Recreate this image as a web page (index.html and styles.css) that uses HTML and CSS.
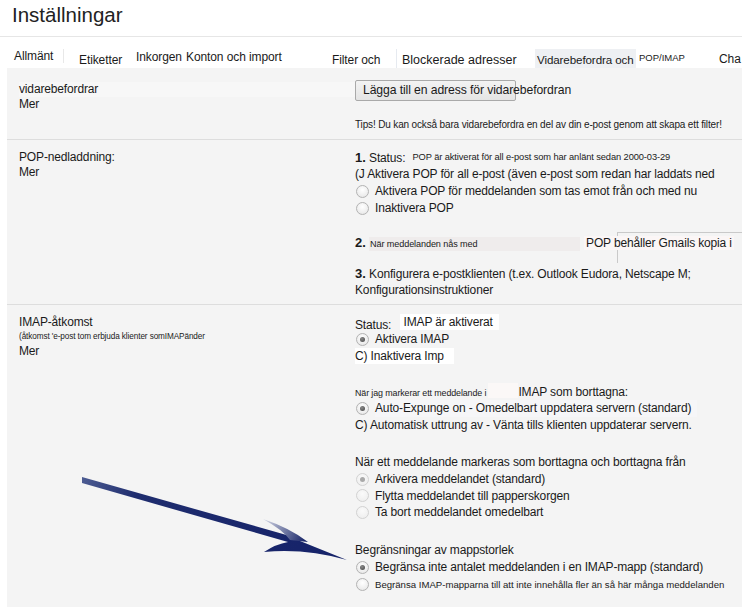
FILE: index.html
```html
<!DOCTYPE html>
<html lang="sv">
<head>
<meta charset="utf-8">
<title>Inställningar</title>
<link rel="stylesheet" href="styles.css">
</head>
<body>
<header class="header">Inställningar</header>
<nav class="tabs">
  <span class="tab t1">Allmänt</span>
  <span class="tab t2">Etiketter</span>
  <span class="tab t3">Inkorgen</span>
  <span class="tab t4">Konton och import</span>
  <span class="tab t5">Filter och</span>
  <span class="tab t6">Blockerade adresser</span>
  <span class="tab t7"><span class="active">Vidarebefordra och</span></span>
  <span class="tab t8">POP/IMAP</span>
  <span class="tab t9">Cha</span>
</nav>
<main class="panel">
  <section class="row row1">
    <div class="left">
      <div class="lbl">vidarebefordrar</div>
      <div class="lbl">Mer</div>
    </div>
    <div class="right">
      <div class="btnline"><span class="btn">Lägga till en adress för vidarebefordran</span></div>
      <div class="tips">Tips! Du kan också bara vidarebefordra en del av din e-post genom att skapa ett filter!</div>
    </div>
  </section>
  <section class="row row2">
    <div class="left">
      <div class="lbl">POP-nedladdning:</div>
      <div class="lbl">Mer</div>
    </div>
    <div class="right">
      <div class="line"><b class="num">1.</b> Status: <span class="small s1">POP är aktiverat för all e-post som har anlänt sedan 2000-03-29</span></div>
      <div class="line">(J Aktivera POP för all e-post (även e-post som redan har laddats ned</div>
      <div class="line opt"><span class="radio"></span>Aktivera POP för meddelanden som tas emot från och med nu</div>
      <div class="line opt"><span class="radio"></span>Inaktivera POP</div>
      <div class="line gap2"><b class="num">2.</b> <span class="small s2">När meddelanden nås med</span><span class="keep">POP behåller Gmails kopia i</span></div>
      <div class="line gap3"><b class="num">3.</b> Konfigurera e-postklienten (t.ex. Outlook Eudora, Netscape M;</div>
      <div class="line">Konfigurationsinstruktioner</div>
    </div>
  </section>
  <section class="row row3">
    <div class="left">
      <div class="lbl">IMAP-åtkomst</div>
      <div class="tiny">(åtkomst 'e-post tom erbjuda klienter somIMAPänder</div>
      <div class="lbl">Mer</div>
    </div>
    <div class="right">
      <div class="line">Status: <span class="white w1">IMAP är aktiverat</span></div>
      <div class="line opt"><span class="radio on"></span>Aktivera IMAP</div>
      <div class="line"><span class="white w2">C) Inaktivera Imp</span></div>
      <div class="line gapA"><span class="small s3">När jag markerar ett meddelande i</span><span class="blank"></span>IMAP som borttagna:</div>
      <div class="line opt"><span class="radio on"></span><span class="soft">Auto-Expunge on - Omedelbart uppdatera servern (standard)</span></div>
      <div class="line">C) Automatisk uttrung av - Vänta tills klienten uppdaterar servern.</div>
      <div class="line gapB">När ett meddelande markeras som borttagna och borttagna från</div>
      <div class="line opt tight"><span class="radio dis on"></span>Arkivera meddelandet (standard)</div>
      <div class="line opt tight"><span class="radio dis"></span>Flytta meddelandet till papperskorgen</div>
      <div class="line opt tight"><span class="radio dis"></span>Ta bort meddelandet omedelbart</div>
      <div class="line gapC">Begränsningar av mappstorlek</div>
      <div class="line opt"><span class="radio on"></span>Begränsa inte antalet meddelanden i en IMAP-mapp (standard)</div>
      <div class="line opt"><span class="radio"></span><span class="small s4">Begränsa IMAP-mapparna till att inte innehålla fler än så här många meddelanden</span></div>
    </div>
  </section>
</main>
<svg class="arrow" width="742" height="607" viewBox="0 0 742 607" aria-hidden="true">
  <defs>
    <linearGradient id="shaft" x1="82" y1="478" x2="300" y2="540" gradientUnits="userSpaceOnUse">
      <stop offset="0" stop-color="#4d5c92"/>
      <stop offset="0.25" stop-color="#1f2d6e"/>
      <stop offset="1" stop-color="#17246a"/>
    </linearGradient>
    <linearGradient id="wing" x1="263" y1="519" x2="305" y2="540" gradientUnits="userSpaceOnUse">
      <stop offset="0" stop-color="#d6d9e6"/>
      <stop offset="1" stop-color="#1a276a"/>
    </linearGradient>
  </defs>
  <path d="M82,477 L290,536 L300,541 L347,560 Q305,548 264,552 Q276,544 288,542 L82,483 Z" fill="url(#shaft)"/>
  <path d="M263,519 Q290,528 308,542 L290,540 Q283,530 263,519 Z" fill="url(#wing)"/>
</svg>
</body>
</html>
```
FILE: styles.css
```css
html, body {
  margin: 0;
  padding: 0;
  background: #ffffff;
}
body {
  font-family: "Liberation Sans", Arial, sans-serif;
  color: #1a1a1a;
  font-size: 12px;
  letter-spacing: -0.15px;
  width: 742px;
  height: 607px;
  overflow: hidden;
  position: relative;
}
.header {
  font-size: 20.5px;
  letter-spacing: 0;
  padding: 3px 0 0 12px;
  height: 33px;
  border-bottom: 1px solid #e6e6e6;
  color: #222;
}
.tabs {
  display: flex;
  align-items: flex-start;
  height: 19px;
  margin-top: 12px;
  padding-left: 14px;
  font-size: 12px;
  letter-spacing: -0.1px;
  white-space: nowrap;
  overflow: hidden;
}
.tab { display: block; padding-top: 2px; }
.t1 { width: 49px; padding-top: 0; border-right: 1px solid #e8e8e8; margin-right: 15px; height: 14px; }
.t2 { width: 57px; padding-top: 4px; }
.t3 { width: 50px; padding-top: 1px; }
.t4 { width: 146px; padding-top: 1px; }
.t5 { width: 64px; padding-top: 4px; border-right: 1px solid #e6eaf0; margin-right: 5px; height: 15px; }
.t6 { width: 126px; padding-top: 4px; font-size: 12.5px; letter-spacing: 0; }
.t7 { width: 111px; padding-top: 0; font-size: 11.6px; }
.active { display: inline-block; background: #eef0f3; height: 19px; line-height: 21px; margin-left: 7px; padding: 0 2px; }
.t8 { width: 80px; font-size: 9.5px; padding-top: 3px; letter-spacing: 0; }
.t9 { padding-top: 3px; }
.panel {
  margin-left: 7px;
  background: #f4f4f4;
  height: 539px;
  overflow: hidden;
}
.row {
  display: grid;
  grid-template-columns: 348px 1fr;
  border-bottom: 1px solid #dddddd;
}
.row3 { border-bottom: none; }
.left { padding-left: 12px; }
.lbl { line-height: 15px; }
.row1 { height: 71px; }
.row1 .left { padding-top: 14px; }
.row1 .left .lbl:first-child { background: #f7f7f7; }
.btnline { padding-top: 12px; height: 21px; }
.btn {
  display: inline-block;
  box-sizing: border-box;
  width: 161px;
  height: 21px;
  line-height: 19px;
  padding-left: 7px;
  border: 1px solid #a9a9a9;
  border-radius: 2px;
  background: linear-gradient(#f3f3f3, #e4e4e4);
  white-space: nowrap;
  overflow: visible;
  font-size: 12.2px;
  letter-spacing: -0.1px;
}
.tips {
  font-size: 10px;
  letter-spacing: -0.15px;
  margin-top: 18px;
  white-space: nowrap;
}
.row2 { height: 164px; }
.row2 .left { padding-top: 10px; }
.row2 .right, .row3 .right { padding-top: 9px; }
.line { line-height: 17px; height: 17px; white-space: nowrap; position: relative; z-index: 0; }
.tight { line-height: 16.5px; height: 16.5px; }
.num { font-weight: bold; font-size: 13px; letter-spacing: 0; }
.small { font-size: 9.3px; letter-spacing: -0.1px; }
.s1 { margin-left: 4px; vertical-align: 2px; }
.s2 { display: inline-block; background: #efecec; width: 210px; line-height: 14px; padding-left: 1px; font-size: 9.1px; }
.keep { position: relative; background: #fbf6f6; margin-left: 4px; padding: 0 2px; }
.keep::before {
  content: "";
  position: absolute;
  left: 33px;
  top: -4px;
  width: 200px;
  height: 30px;
  border-top: 1px solid #c9c9c9;
  border-left: 1px solid #c9c9c9;
  z-index: -1;
}
.opt { display: flex; align-items: center; }
.radio {
  display: inline-block;
  box-sizing: border-box;
  width: 13px;
  height: 13px;
  border-radius: 50%;
  border: 1px solid #b3b3b3;
  background: radial-gradient(circle at 50% 35%, #ffffff 0, #ececec 70%, #dcdcdc 100%);
  margin: 0 6px 0 1px;
  position: relative;
  flex: none;
}
.radio.on::after {
  content: "";
  position: absolute;
  left: 3px;
  top: 3px;
  width: 5px;
  height: 5px;
  border-radius: 50%;
  background: radial-gradient(circle at 40% 35%, #8a8a8a, #444);
}
.radio.dis { border-color: #d2d2d2; background: radial-gradient(circle at 50% 35%, #fafafa, #ececec); }
.radio.dis.on::after { background: #a9a9a9; }
.gap2 { margin-top: 17px; }
.gap3 { margin-top: 14px; }
.row3 .left { padding-top: 10px; }
.tiny { font-size: 8.2px; line-height: 14px; letter-spacing: -0.1px; }
.white { background: #ffffff; display: inline-block; line-height: 16px; }
.w1 { margin-left: 5px; padding: 0 6px 0 4px; vertical-align: 3px; }
.w2 { padding-right: 10px; }
.gapA { margin-top: 18px; }
.s3 { display: inline-block; font-size: 8.9px; }
.blank { display: inline-block; width: 30px; height: 15px; background: #fbf8f7; vertical-align: -2px; margin-left: 2px; }
.soft { background: #f6f6f8; padding-right: 6px; }
.gapB { margin-top: 20px; }
.gapC { margin-top: 21px; }
.s4 { font-size: 9.6px; letter-spacing: 0; }
.arrow {
  position: absolute;
  left: 0;
  top: 0;
  pointer-events: none;
}
```
